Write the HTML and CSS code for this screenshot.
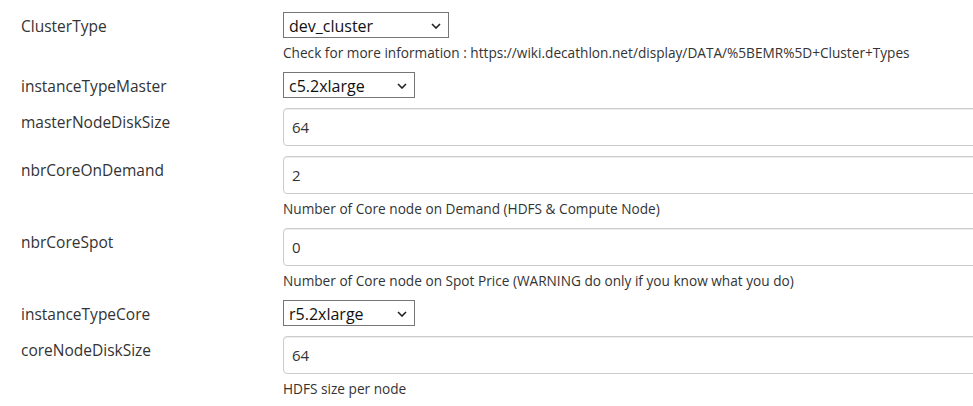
FILE: index.html
```html
<!DOCTYPE html>
<html lang="en">
<head>
<meta charset="utf-8">
<title>Build parameters</title>
<link rel="stylesheet" href="styles.css">
</head>
<body>
<form class="params">
  <div class="row">
    <div class="label">ClusterType</div>
    <div class="value">
      <div class="select w166"><span>dev_cluster</span><svg class="chev" width="10" height="6" viewBox="0 0 10 6"><path d="M1 1 L5 5 L9 1" fill="none" stroke="#222" stroke-width="1.6"/></svg></div>
      <div class="help">Check for more information : https://wiki.decathlon.net/display/DATA/%5BEMR%5D+Cluster+Types</div>
    </div>
  </div>
  <div class="row">
    <div class="label">instanceTypeMaster</div>
    <div class="value">
      <div class="select w132"><span>c5.2xlarge</span><svg class="chev" width="10" height="6" viewBox="0 0 10 6"><path d="M1 1 L5 5 L9 1" fill="none" stroke="#222" stroke-width="1.6"/></svg></div>
    </div>
  </div>
  <div class="row">
    <div class="label">masterNodeDiskSize</div>
    <div class="value">
      <div class="input">64</div>
    </div>
  </div>
  <div class="row">
    <div class="label">nbrCoreOnDemand</div>
    <div class="value">
      <div class="input">2</div>
      <div class="help">Number of Core node on Demand (HDFS &amp; Compute Node)</div>
    </div>
  </div>
  <div class="row">
    <div class="label">nbrCoreSpot</div>
    <div class="value">
      <div class="input">0</div>
      <div class="help">Number of Core node on Spot Price (WARNING do only if you know what you do)</div>
    </div>
  </div>
  <div class="row">
    <div class="label">instanceTypeCore</div>
    <div class="value">
      <div class="select w132"><span>r5.2xlarge</span><svg class="chev" width="10" height="6" viewBox="0 0 10 6"><path d="M1 1 L5 5 L9 1" fill="none" stroke="#222" stroke-width="1.6"/></svg></div>
    </div>
  </div>
  <div class="row">
    <div class="label">coreNodeDiskSize</div>
    <div class="value">
      <div class="input">64</div>
      <div class="help">HDFS size per node</div>
    </div>
  </div>
</form>
</body>
</html>
```

FILE: styles.css
```css
html, body {
  margin: 0;
  padding: 0;
  background: #fff;
  overflow: hidden;
}
body {
  font-family: "Open Sans", "Noto Sans", sans-serif;
  color: #333;
}
.params {
  display: flex;
  flex-direction: column;
  gap: 10px;
  padding-top: 12px;
}
.row {
  display: grid;
  grid-template-columns: 262px 1fr;
  align-items: start;
  padding-left: 21px;
}
.label {
  font-size: 15.5px;
  height: 26px;
  line-height: 28px;
  color: #333;
}
.value {
  display: flex;
  flex-direction: column;
  align-items: flex-start;
}
.select {
  box-sizing: border-box;
  height: 26px;
  border: 1px solid #767676;
  display: flex;
  align-items: center;
  justify-content: space-between;
  padding: 1px 7px 0 5px;
  font-size: 16px;
  color: #111;
  background: #fff;
}
.w166 { width: 166px; }
.w132 { width: 132px; }
.input {
  box-sizing: border-box;
  width: 720px;
  height: 38px;
  border: 1px solid #ccc;
  border-radius: 4px;
  box-shadow: inset 0 1px 1px rgba(0,0,0,.075);
  padding: 0 8px;
  display: flex;
  align-items: center;
  font-size: 15px;
  color: #333;
}
.help {
  font-size: 13.65px;
  line-height: 18px;
  margin-top: 6px;
  color: #333;
}
```
